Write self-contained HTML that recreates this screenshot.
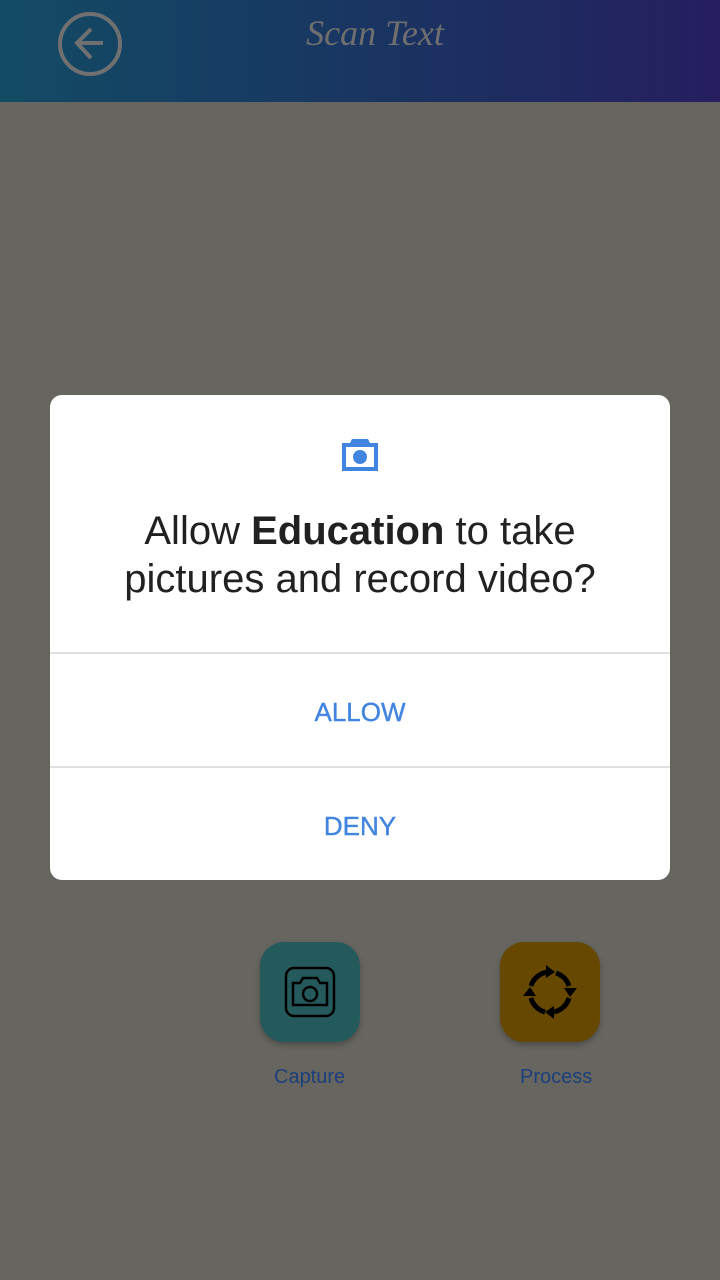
<!DOCTYPE html>
<html><head><meta charset="utf-8"><style>
html,body{margin:0;padding:0}
body{width:720px;height:1280px;position:relative;overflow:hidden;background:#666560;font-family:"Liberation Sans",sans-serif}
.hdr{position:absolute;left:0;top:0;width:720px;height:102px;background:linear-gradient(90deg,#134b64,#173a62 40%,#1f2a60 75%,#261e5f)}
.title{position:absolute;left:0;width:750px;top:12px;text-align:center;font-family:"Liberation Serif",serif;font-style:italic;font-size:36px;color:#6f6f6f}
.dlg{position:absolute;left:50px;top:395px;width:620px;height:485px;background:#fff;border-radius:12px}
.q{position:absolute;top:112px;left:0;width:620px;text-align:center;font-size:40px;line-height:48px;color:#212121}
.sep{position:absolute;left:0;width:620px;height:2px;background:#e0e0e0}
.btn{position:absolute;left:0;width:620px;text-align:center;font-size:26px;color:#4285e0;-webkit-text-stroke:0.4px #4285e0}
.ib{position:absolute;width:100px;height:100px;border-radius:24px;top:942px;box-shadow:0 3px 6px rgba(0,0,0,.25)}
.lbl{position:absolute;top:1066px;font-size:20px;color:#1d3f7a}
</style></head><body>
<div class="hdr">
<svg style="position:absolute;left:56px;top:10px" width="68" height="68" viewBox="0 0 68 68"><circle cx="34" cy="34" r="30" fill="none" stroke="#707070" stroke-width="4"/><path d="M20 33H47M35 19L21 33L35 48" fill="none" stroke="#707070" stroke-width="4"/></svg>
<div class="title">Scan Text</div>
</div>
<div class="dlg">
<svg style="position:absolute;left:290px;top:42px" width="40" height="36" viewBox="0 0 40 36"><path d="M12 2h16l2 4h8v28H2V6h8z" fill="#4285e0"/><rect x="6" y="10" width="28" height="20" fill="#fff"/><circle cx="20" cy="20" r="7" fill="#4285e0"/></svg>
<div class="q">Allow <b>Education</b> to take<br>pictures and record video?</div>
<div class="sep" style="top:257px"></div>
<div class="btn" style="top:302px">ALLOW</div>
<div class="sep" style="top:371px"></div>
<div class="btn" style="top:416px">DENY</div>
</div>
<div class="ib" style="left:260px;background:#255a5d">
<svg style="position:absolute;left:24px;top:24px" width="52" height="52" viewBox="0 0 52 52" fill="none" stroke="#000" stroke-width="2.5"><rect x="2" y="2" width="48" height="48" rx="8"/><path d="M9 17h7l3-5h14l3 5h7v22H9z"/><circle cx="26" cy="28" r="7"/></svg>
</div>
<div class="ib" style="left:500px;background:#664800">
<svg style="position:absolute;left:20px;top:20px" width="60" height="60" viewBox="0 0 60 60" fill="none" stroke="#000" stroke-width="5"><path d="M11 24A20 20 0 0 1 28 10"/><path d="M36 11A20 20 0 0 1 49 24"/><path d="M49 36A20 20 0 0 1 34 50"/><path d="M25 50A20 20 0 0 1 11 36"/><path d="M26 3l9 7-9 6z" fill="#000" stroke="none"/><path d="M57 26l-7 9-6-9z" fill="#000" stroke="none"/><path d="M34 57l-9-7 9-6z" fill="#000" stroke="none"/><path d="M3 34l7-9 6 9z" fill="#000" stroke="none"/></svg>
</div>
<div class="lbl" style="left:274px">Capture</div>
<div class="lbl" style="left:520px">Process</div>
</body></html>
